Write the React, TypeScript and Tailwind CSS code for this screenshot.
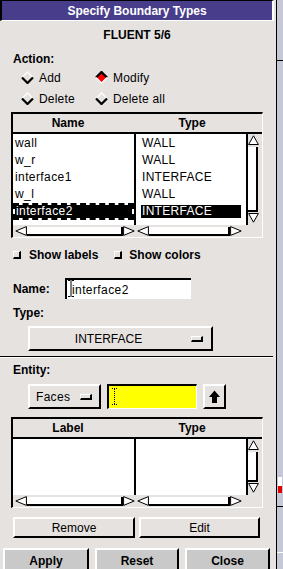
import React from "react";

function Diamond({ on }: { on?: boolean }) {
  return (
    <svg width="13" height="13" viewBox="0 0 13 13" className="shrink-0">
      <polygon points="6.5,1 12,6.5 6.5,12 1,6.5" fill={on ? "#ff0000" : "#e6e2e0"} />
      <polyline points="1,6.5 6.5,1 12,6.5" fill="none" stroke={on ? "#000" : "#fff"} strokeWidth={on ? 2.2 : 1.3} />
      <polyline points="1,6.5 6.5,12 12,6.5" fill="none" stroke={on ? "#fff" : "#000"} strokeWidth={on ? 1.3 : 2.2} />
    </svg>
  );
}

function Radio({ label, on, wide }: { label: string; on?: boolean; wide?: boolean }) {
  return (
    <div className={`flex items-center gap-[5px] ${wide ? "w-[74px]" : ""}`}>
      <Diamond on={on} />
      <span className="tracking-[0.2px]">{label}</span>
    </div>
  );
}

function Arrow({ dir }: { dir: "up" | "down" | "left" | "right" }) {
  const pts: Record<string, string> = {
    up: "5.5,0.8 10.4,9.5 0.6,9.5",
    down: "0.6,0.5 10.4,0.5 5.5,9.2",
    left: "0.8,5 11.4,0.6 11.4,9.4",
    right: "0.6,0.6 11.2,5 0.6,9.4",
  };
  const vertical = dir === "up" || dir === "down";
  return (
    <svg width={vertical ? 11 : 12} height={10} viewBox={vertical ? "0 0 11 10" : "0 0 12 10"} className="shrink-0">
      <polygon points={pts[dir]} fill="#fff" stroke="#000" strokeWidth="1" />
    </svg>
  );
}

function VScroll() {
  return (
    <div className="w-[14px] border-t-2 border-black flex flex-col">
      <div className="h-[13px] pl-[0px] pt-[1px] flex">
        <Arrow dir="up" />
      </div>
      <div className="flex-1 w-[10px] bg-white border-r-2 border-b-2 border-black" />
      <div className="h-[13px] pl-[0px] pt-[1px] flex">
        <Arrow dir="down" />
      </div>
    </div>
  );
}

function HScrollPart({ w, pl, slider }: { w: string; pl: string; slider: string }) {
  return (
    <div className={`${w} ${pl} flex items-center h-full`}>
      <Arrow dir="left" />
      <div className={`${slider} h-[9px] bg-white border-b-2 border-r-2 border-black`} />
      <Arrow dir="right" />
    </div>
  );
}

function Table({
  h1,
  h2,
  listH,
  names,
  types,
}: {
  h1: string;
  h2: string;
  listH: string;
  names: React.ReactNode;
  types: React.ReactNode;
}) {
  return (
    <div className="ml-[11px] w-[252px] border-t-2 border-l-2 border-t-black border-l-black border-r border-b border-r-white border-b-white flex flex-col shrink-0">
      <div className="h-[18px] flex items-center font-bold">
        <div className="w-[123px] pr-[13px] text-center">{h1}</div>
        <div className="w-[112px] text-center">{h2}</div>
      </div>
      <div className={`flex ${listH}`}>
        <div className="w-[123px] bg-white border-t-2 border-r-2 border-black pt-[1px] tracking-[0.4px]">{names}</div>
        <div className="w-[112px] bg-white border-t-2 border-r-2 border-black pt-[1px] tracking-[0.3px]">{types}</div>
        <VScroll />
      </div>
      <div className="h-[12px] flex">
        <HScrollPart w="w-[123px]" pl="pl-[2px]" slider="w-[96px]" />
        <HScrollPart w="w-[112px]" pl="pl-[1px]" slider="w-[81px]" />
        <div className="w-[14px]" />
      </div>
    </div>
  );
}

function Check({ className = "" }: { className?: string }) {
  return (
    <span
      className={`inline-block w-[8px] h-[8px] shrink-0 border-t border-l border-t-white border-l-white border-b-2 border-r-2 border-b-black border-r-black ${className}`}
    />
  );
}

const raised = "border-t-2 border-l-2 border-t-white border-l-white border-b-2 border-r-2 border-b-black border-r-black";

function Indicator({ className = "" }: { className?: string }) {
  return (
    <span
      className={`inline-block w-[12px] h-[6px] shrink-0 border-t border-l border-t-white border-l-white border-b-2 border-r-2 border-b-black border-r-black ${className}`}
    />
  );
}

export default function App() {
  const nameRows = ["wall", "w_r", "interface1", "w_l"];
  const typeRows = ["WALL", "WALL", "INTERFACE", "WALL"];
  return (
    <div className="w-[283px] h-[569px] overflow-hidden flex bg-[#e6e2e0] font-['Liberation_Sans',Arial,sans-serif] text-[12px] leading-[14px] text-black">
      <div className="w-[276px] h-full flex flex-col shrink-0">
        <div className="w-[274px] h-[21px] shrink-0 bg-[#483d8b] border-l-2 border-t border-r-2 border-b border-l-black border-t-black border-r-white border-b-white flex items-center justify-center text-white font-bold">
          Specify Boundary Types
        </div>
        <div className="w-[274px] mt-[7px] h-[14px] text-center font-bold shrink-0">FLUENT 5/6</div>
        <div className="mt-[10px] h-[14px] pl-[13px] font-bold shrink-0">Action:</div>
        <div className="mt-[1px] flex h-[21px] items-center pl-[21px] shrink-0">
          <Radio label="Add" wide />
          <Radio label="Modify" on />
        </div>
        <div className="flex h-[21px] items-center pl-[21px] shrink-0">
          <Radio label="Delete" wide />
          <Radio label="Delete all" />
        </div>

        <div className="mt-[3px]">
          <Table
            h1="Name"
            h2="Type"
            listH="h-[93px]"
            names={
              <>
                {nameRows.map((n) => (
                  <div key={n} className="h-[17px] leading-[17px] pl-[2px]">
                    {n}
                  </div>
                ))}
                <div className="h-[17px] border-2 border-dashed border-black bg-black bg-clip-padding text-white leading-[13px] pl-[1px]">
                  interface2
                </div>
              </>
            }
            types={
              <>
                {typeRows.map((t, i) => (
                  <div key={i} className="h-[17px] leading-[17px] pl-[6px]">
                    {t}
                  </div>
                ))}
                <div className="h-[17px] py-[2px] pl-[5px]">
                  <div className="w-[100px] h-[13px] bg-black text-white leading-[13px] pl-[1px]">INTERFACE</div>
                </div>
              </>
            }
          />
        </div>

        <div className="mt-[9px] h-[16px] flex items-center pl-[13px] font-bold shrink-0">
          <Check />
          <span className="ml-[8px]">Show labels</span>
          <Check className="ml-[16px]" />
          <span className="ml-[7px]">Show colors</span>
        </div>

        <div className="mt-[15px] h-[21px] flex items-center pl-[13px] shrink-0">
          <span className="w-[52px] font-bold">Name:</span>
          <div className="relative w-[126px] h-[21px] bg-white border-t-2 border-l-2 border-black flex items-center pl-[5px] tracking-[0.4px]">
            interface2
            <svg className="absolute left-[1px] top-[0px]" width="6" height="17" viewBox="0 0 6 17">
              <path d="M0 0.5H2.5M3.5 0.5H6M3 1V16M0 16.5H2.5M3.5 16.5H6" stroke="#000" strokeWidth="1" fill="none" />
            </svg>
          </div>
        </div>

        <div className="mt-[7px] h-[14px] pl-[13px] font-bold shrink-0">Type:</div>

        <div className={`mt-[6px] ml-[28px] w-[185px] h-[25px] flex items-center shrink-0 ${raised}`}>
          <span className="w-[157px] text-center">INTERFACE</span>
          <Indicator className="ml-[4px]" />
        </div>

        <div className="mt-[5px] w-[273px] h-[1px] bg-black shrink-0" />
        <div className="w-[273px] h-[1px] bg-white shrink-0" />

        <div className="mt-[5px] h-[14px] pl-[13px] font-bold shrink-0">Entity:</div>

        <div className="mt-[7px] h-[25px] flex pl-[28px] shrink-0">
          <div className={`w-[73px] h-[25px] flex items-center pl-[6px] tracking-[0.3px] ${raised}`}>
            Faces
            <Indicator className="ml-[10px]" />
          </div>
          <div className="relative ml-[6px] w-[90px] h-[25px] bg-[#ffff00] border-t-2 border-l-2 border-t-black border-l-black border-b border-r border-b-white border-r-white">
            <svg className="absolute left-[3px] top-[2px]" width="5" height="17" viewBox="0 0 5 17">
              <path d="M0 0.5H5M2.5 1V16M0 16.5H5" stroke="#000" strokeWidth="1" strokeDasharray="1 1" fill="none" />
            </svg>
          </div>
          <div className={`ml-[6px] w-[23px] h-[25px] flex items-center justify-center ${raised}`}>
            <svg width="11" height="14" viewBox="0 0 11 14">
              <polygon points="5.5,0.5 11,7 8,7 8,13 3,13 3,7 0,7" fill="#000" />
            </svg>
          </div>
        </div>

        <div className="mt-[8px]">
          <Table h1="Label" h2="Type" listH="h-[58px]" names={null} types={null} />
        </div>

        <div className="mt-[9px] h-[21px] flex pl-[13px] shrink-0">
          <div className={`w-[122px] h-[21px] flex items-center justify-center ${raised}`}>Remove</div>
          <div className={`ml-[4px] w-[121px] h-[21px] flex items-center justify-center ${raised}`}>Edit</div>
        </div>

        <div className="mt-[10px] h-[25px] flex pl-[3px] font-bold shrink-0">
          <div className={`w-[86px] h-[25px] bg-[#c9c9c9] flex items-center justify-center ${raised}`}>Apply</div>
          <div className={`ml-[6px] w-[84px] h-[25px] bg-[#c9c9c9] flex items-center justify-center ${raised}`}>Reset</div>
          <div className={`ml-[6px] w-[85px] h-[25px] bg-[#c9c9c9] flex items-center justify-center ${raised}`}>Close</div>
        </div>
      </div>

      <div className="w-[7px] h-full border-l border-black bg-[#c6c8d8] flex flex-col shrink-0">
        <div className="h-[60px]" />
        <div className="h-[1px] bg-black" />
        <div className="h-[416px]" />
        <div className="ml-[1px] w-[4px] h-[16px] bg-white flex flex-col justify-end">
          <div className="h-[7px] bg-[#e00000]" />
        </div>
        <div className="h-[13px]" />
        <div className="h-[1px] bg-black" />
        <div className="h-[45px]" />
        <div className="h-[1px] bg-white" />
      </div>
    </div>
  );
}
